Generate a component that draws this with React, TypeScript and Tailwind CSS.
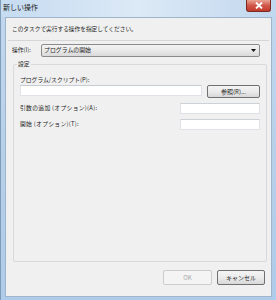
import React from "react";

const font = { fontFamily: '"Noto Sans CJK JP", "Noto Sans", sans-serif' };

function Btn({ children, disabled, className }: { children: React.ReactNode; disabled?: boolean; className?: string }) {
  return (
    <div
      className={
        "flex items-center justify-center rounded-[2px] border text-[6px] " +
        (disabled
          ? "border-[#c9cdd0] bg-[#f4f4f4] text-[#a6a6a6] "
          : "border-[#707070] bg-gradient-to-b from-[#f4f4f4] via-[#ebebeb] to-[#d8d8d8] text-[#1a1a1a] ") +
        (className ?? "")
      }
    >
      {children}
    </div>
  );
}

export default function App() {
  return (
    <div className="w-[276px] h-[300px] overflow-hidden" style={font}>
      <div className="w-[276px] h-[300px] flex flex-col bg-gradient-to-b from-[#c2d8ef] via-[#b7d0ea] to-[#aecbe9] border-l border-[#7f9db9]">
        {/* title bar */}
        <div className="h-[17px] flex items-start justify-between bg-gradient-to-r from-[#c6dcf1] via-[#dce9f6] to-[#c2d8ee]">
          <div className="pl-[2px] pt-[3px] text-[7px] leading-[9px] text-[#1a1a1a]">新しい操作</div>
          <div className="mr-[5px] w-[25px] h-[12px] rounded-b-[3px] border border-t-0 border-[#7a2a22] bg-gradient-to-b from-[#e8a394] via-[#d1574a] to-[#c23a2c] flex items-center justify-center">
            <svg width="8" height="7" viewBox="0 0 8 7">
              <path d="M1 0.5 L7 6.5 M7 0.5 L1 6.5" stroke="#ffffff" strokeWidth="1.8" />
            </svg>
          </div>
        </div>
        {/* client */}
        <div className="ml-[4px] mr-[4px] mb-[3px] flex-1 bg-[#f0f0f0] border border-[#9fb5cc] flex flex-col">
          <div className="pl-[6px] pt-[7px] text-[5.7px] leading-[8px] text-[#1e1e1e]">
            このタスクで実行する操作を指定してください。
          </div>
          <div className="mx-[2px] mt-[7px] h-px bg-[#d5d5d5]" />
          <div className="mt-[3px] flex items-center pl-[6px] pr-[11px]">
            <div className="w-[29px] text-[5.8px] text-[#1e1e1e]">操作(I):</div>
            <div className="flex-1 h-[13px] rounded-[2px] border border-[#8a8a8a] bg-gradient-to-b from-[#f3f3f3] via-[#e9e9e9] to-[#d9d9d9] flex items-center justify-between pl-[2px] pr-[3px]">
              <span className="text-[5.9px] text-[#1e1e1e]">プログラムの開始</span>
              <svg width="5" height="3" viewBox="0 0 5 3">
                <path d="M0 0 H5 L2.5 3 Z" fill="#111" />
              </svg>
            </div>
          </div>
          {/* group box */}
          <div className="relative mt-[7px] ml-[7px] mr-[4px] h-[198px] border border-[#d9d9d9] rounded-[2px]">
            <div className="absolute left-[3px] top-[-5px] bg-[#f0f0f0] px-[1px] text-[5.8px] leading-[8px] text-[#1e1e1e]">設定</div>
            <div className="pl-[6px] pr-[6px] pt-[11px] flex flex-col">
              <div className="text-[5.8px] leading-[8px] text-[#1e1e1e]">プログラム/スクリプト(P):</div>
              <div className="mt-[1px] flex items-start">
                <div className="w-[182px] h-[11px] bg-white border border-[#dfe3e8] border-t-[#c6ccd4]" />
                <Btn className="ml-[5px] w-[53px] h-[13px]">参照(R)...</Btn>
              </div>
              <div className="mt-[5px] flex items-center justify-between">
                <div className="text-[5.8px] tracking-[0.3px] text-[#1e1e1e]">引数の追加 (オプション)(A):</div>
                <div className="w-[80px] h-[11px] bg-white border border-[#dfe3e8] border-t-[#ccd2d8]" />
              </div>
              <div className="mt-[5px] flex items-center justify-between">
                <div className="text-[5.8px] tracking-[0.3px] text-[#1e1e1e]">開始 (オプション)(T):</div>
                <div className="w-[80px] h-[11px] bg-white border border-[#dfe3e8] border-t-[#ccd2d8]" />
              </div>
            </div>
          </div>
          <div className="mt-[8px] flex justify-end gap-[5px] pr-[6px]">
            <Btn disabled className="w-[49px] h-[15px]">OK</Btn>
            <Btn className="w-[48px] h-[15px]">キャンセル</Btn>
          </div>
        </div>
      </div>
    </div>
  );
}
